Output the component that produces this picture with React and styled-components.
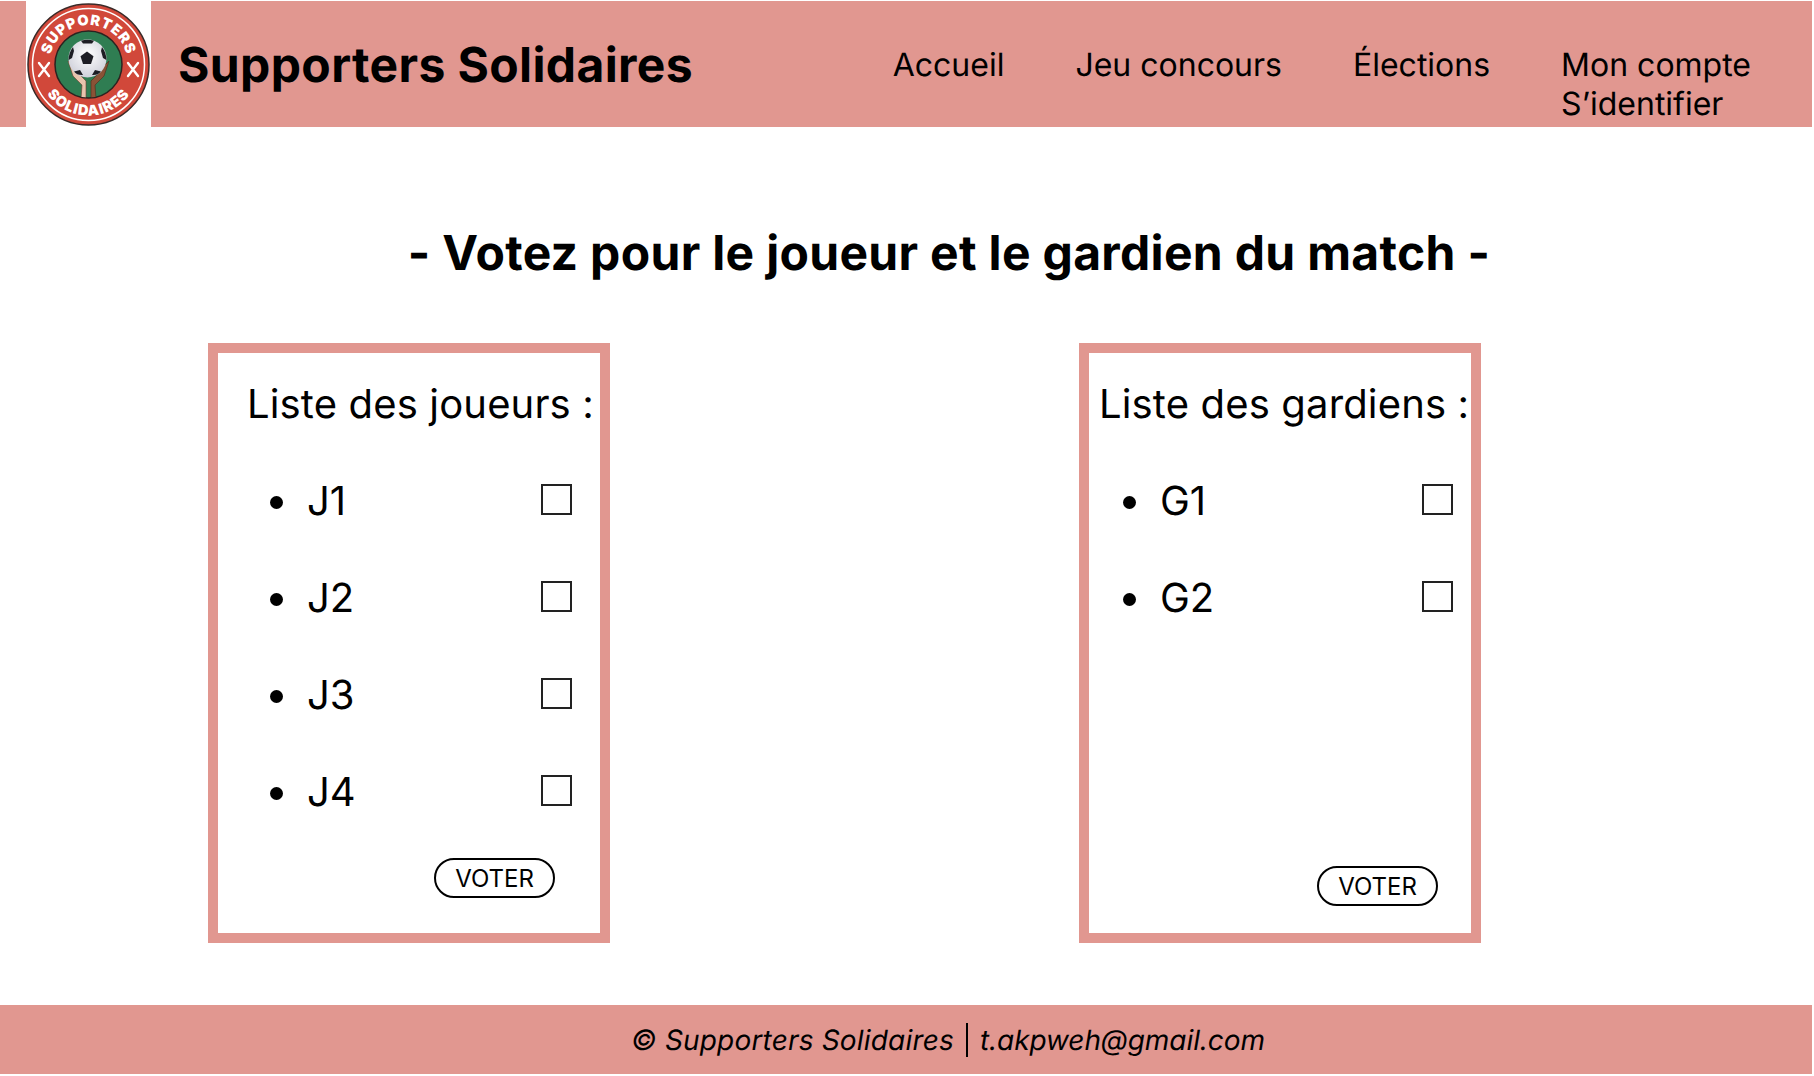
import styled, { createGlobalStyle } from 'styled-components';

const GlobalStyle = createGlobalStyle`
  body {
    margin: 0;
    background: #fff;
    font-family: 'Inter', 'Liberation Sans', sans-serif;
    color: #000;
    text-rendering: geometricPrecision;
  }
`;

const Page = styled.div`
  width: 1814px;
  height: 1076px;
  padding: 1px 2px 2px 0;
  box-sizing: border-box;
  display: flex;
  flex-direction: column;
  overflow: hidden;
`;

const Header = styled.header`
  height: 126px;
  flex: none;
  background: #e19790;
  display: flex;
  align-items: stretch;
`;

const LogoBox = styled.div`
  width: 125px;
  margin-left: 26px;
  background: #fff;
  display: flex;
  align-items: center;
  justify-content: center;
`;

const Brand = styled.div`
  margin-left: 27px;
  font-size: 48px;
  font-weight: 700;
  align-self: center;
  letter-spacing: 0.38px;
`;

const Nav = styled.nav`
  margin-left: auto;
  margin-right: 61px;
  display: flex;
  gap: 71px;
  padding-top: 45px;
  font-size: 32px;
  line-height: 38.5px;
`;

const NavItem = styled.a`
  display: block;
`;

const Main = styled.main`
  flex: 1;
`;

const Title = styled.h1`
  margin: 0 0 0 86px;
  padding: 96px 0 0 0;
  height: 216px;
  box-sizing: border-box;
  text-align: center;
  font-size: 48px;
  line-height: 60px;
  font-weight: 700;
  letter-spacing: 0.32px;
`;

const Columns = styled.div`
  display: flex;
  gap: 469px;
  padding-left: 208px;
`;

const Card = styled.section`
  width: 402px;
  height: 600px;
  box-sizing: border-box;
  border: 10px solid #e19790;
  display: flex;
  flex-direction: column;
  padding: 0 0 ${({ $bottom }) => $bottom}px ${({ $left }) => $left}px;
`;

const CardTitle = styled.h2`
  margin: 26px 0 0 0;
  font-size: 40px;
  line-height: 50px;
  font-weight: 400;
  letter-spacing: 0.15px;
  white-space: nowrap;
`;

const List = styled.ul`
  list-style: none;
  margin: 22px 0 0 ${({ $indent }) => $indent}px;
  padding: 0;
`;

const Row = styled.li`
  height: 97px;
  box-sizing: border-box;
  padding: 2px 0 0 60px;
  display: flex;
  align-items: center;
  justify-content: space-between;
  font-size: 40px;
  position: relative;

  &::before {
    content: '';
    position: absolute;
    left: 23px;
    top: 45px;
    width: 13px;
    height: 13px;
    border-radius: 50%;
    background: #000;
  }
`;

const Check = styled.span`
  width: 31px;
  height: 31px;
  box-sizing: border-box;
  border: 2px solid #222;
  margin-bottom: 2px;
  margin-right: ${({ $gap }) => $gap}px;
`;

const VoteButton = styled.button`
  margin-top: auto;
  align-self: flex-end;
  margin-right: ${({ $gap }) => $gap}px;
  width: 121px;
  height: 40px;
  border: 2px solid #000;
  border-radius: 20px;
  background: #fff;
  font-family: inherit;
  font-size: 24px;
  padding: 0;
  color: #000;
`;

const Footer = styled.footer`
  height: 69px;
  flex: none;
  background: #e19790;
  display: flex;
  align-items: center;
  justify-content: center;
  font-size: 28px;
  font-style: italic;
  gap: 12px;
  padding-left: 84px;
`;

const FooterText = styled.span`
  letter-spacing: ${({ $spacing }) => $spacing}px;
`;

const Divider = styled.span`
  width: 2px;
  height: 34px;
  background: #000;
`;

const Logo = () => (
  <svg width="123" height="123" viewBox="0 0 123 123">
    <defs>
      <path id="arcTop" d="M 22 61.5 A 39.5 39.5 0 0 1 101 61.5" />
      <path id="arcBottom" d="M 10.5 61.5 A 51 51 0 0 0 112.5 61.5" />
      <clipPath id="disc">
        <circle cx="61.5" cy="61.5" r="33" />
      </clipPath>
      <radialGradient id="ball" cx="50%" cy="40%" r="60%">
        <stop offset="0%" stopColor="#ffffff" />
        <stop offset="100%" stopColor="#cfd0da" />
      </radialGradient>
    </defs>
    <circle cx="61.5" cy="61.5" r="60.5" fill="#d1483a" stroke="#3a2a28" strokeWidth="1.5" />
    <circle cx="61.5" cy="61.5" r="56" fill="none" stroke="#fff" strokeWidth="1.5" />
    <circle cx="61.5" cy="61.5" r="33.5" fill="#2f7d52" stroke="#2b2320" strokeWidth="1.5" />
    <g clipPath="url(#disc)">
      <path d="M 54 96 L 55 82 L 46 73 L 41 58 L 47 64 L 53 72 L 59 78 L 59 96 Z" fill="#e8c4ad" stroke="#6b4030" strokeWidth="0.6" />
      <path d="M 69 96 L 68 82 L 77 73 L 82 58 L 76 64 L 70 72 L 64 78 L 64 96 Z" fill="#8a5236" stroke="#4d2c1c" strokeWidth="0.6" />
    </g>
    <circle cx="60.5" cy="55.5" r="19" fill="url(#ball)" />
    <path d="M 60 48.5 L 66.5 53.2 L 64 61 L 56 61 L 53.5 53.2 Z" fill="#1d1d24" />
    <path d="M 54 37.8 Q 60.5 35.6 67 37.8 L 65 40.5 L 56 40.5 Z" fill="#1d1d24" />
    <path d="M 75 44 Q 79.5 50 79.4 57 L 76 55 L 74 48 Z" fill="#1d1d24" />
    <path d="M 46 44 Q 41.5 50 41.6 57 L 45 55 L 47 48 Z" fill="#1d1d24" />
    <path d="M 47 68.5 L 53 67 L 56 72 Q 50 72.5 47 68.5 Z" fill="#1d1d24" />
    <path d="M 74 68.5 L 68 67 L 65 72 Q 71 72.5 74 68.5 Z" fill="#1d1d24" />
    <text fontFamily="Inter, sans-serif" fontSize="14.5" fontWeight="900" fill="#fff" letterSpacing="0.6">
      <textPath href="#arcTop" startOffset="50%" textAnchor="middle">SUPPORTERS</textPath>
    </text>
    <text fontFamily="Inter, sans-serif" fontSize="14.5" fontWeight="900" fill="#fff" letterSpacing="1">
      <textPath href="#arcBottom" startOffset="50%" textAnchor="middle">SOLIDAIRES</textPath>
    </text>
    <g stroke="#fff" strokeWidth="2.4" strokeLinecap="round">
      <path d="M 12 60 L 22 73 M 22 60 L 12 73" />
      <path d="M 101 60 L 111 73 M 111 60 L 101 73" />
    </g>
  </svg>
);

const joueurs = ['J1', 'J2', 'J3', 'J4'];
const gardiens = ['G1', 'G2'];

export default function App() {
  return (
    <Page>
      <GlobalStyle />
      <Header>
        <LogoBox>
          <Logo />
        </LogoBox>
        <Brand>Supporters Solidaires</Brand>
        <Nav>
          <NavItem>Accueil</NavItem>
          <NavItem>Jeu concours</NavItem>
          <NavItem>Élections</NavItem>
          <NavItem>
            Mon compte
            <br />
            S’identifier
          </NavItem>
        </Nav>
      </Header>
      <Main>
        <Title>- Votez pour le joueur et le gardien du match -</Title>
        <Columns>
          <Card $left={29} $bottom={35}>
            <CardTitle>Liste des joueurs :</CardTitle>
            <List $indent={0}>
              {joueurs.map((j) => (
                <Row key={j}>
                  {j}
                  <Check $gap={28} />
                </Row>
              ))}
            </List>
            <VoteButton $gap={45}>VOTER</VoteButton>
          </Card>
          <Card $left={10} $bottom={27}>
            <CardTitle>Liste des gardiens :</CardTitle>
            <List $indent={1}>
              {gardiens.map((g) => (
                <Row key={g}>
                  {g}
                  <Check $gap={18} />
                </Row>
              ))}
            </List>
            <VoteButton $gap={33}>VOTER</VoteButton>
          </Card>
        </Columns>
      </Main>
      <Footer>
        <FooterText $spacing={0.18}>© Supporters Solidaires</FooterText>
        <Divider />
        <FooterText $spacing={-0.08}>t.akpweh@gmail.com</FooterText>
      </Footer>
    </Page>
  );
}
